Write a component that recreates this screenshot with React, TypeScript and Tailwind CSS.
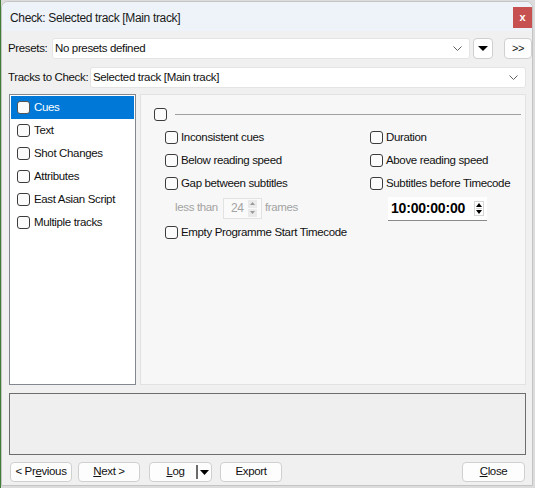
import type { ReactNode } from "react";

// ── Small pieces ────────────────────────────────────────────────────────────

function Box({ className = "" }: { className?: string }) {
  return (
    <span
      className={`inline-block w-[13px] h-[13px] shrink-0 rounded-[3px] border border-[#3c3c3c] bg-[#fbfbfb] ${className}`}
    />
  );
}

function Check({ label }: { label: string }) {
  return (
    <div className="flex items-center h-[23px] gap-[3px]">
      <Box />
      <span>{label}</span>
    </div>
  );
}

function Chevron() {
  return (
    <svg width="9" height="6" viewBox="0 0 9 6" className="shrink-0">
      <polyline points="0.5,0.5 4.5,4.5 8.5,0.5" fill="none" stroke="#606060" strokeWidth="1" />
    </svg>
  );
}

function Combo({ text, className = "" }: { text: string; className?: string }) {
  return (
    <div
      className={`flex items-center h-[21px] bg-white border border-[#e4e4e4] rounded-[3px] pl-[2px] pr-[7px] ${className}`}
    >
      <span className="flex-1 truncate">{text}</span>
      <Chevron />
    </div>
  );
}

function Button({ children, className = "" }: { children: ReactNode; className?: string }) {
  return (
    <div
      className={`flex items-center justify-center h-[20px] bg-[#fdfdfd] border border-[#d0d0d0] rounded-[4px] ${className}`}
    >
      {children}
    </div>
  );
}

function TriDown({ color = "#000", w = 9, h = 5 }: { color?: string; w?: number; h?: number }) {
  return (
    <svg width={w} height={h} viewBox={`0 0 ${w} ${h}`}>
      <polygon points={`0,0 ${w},0 ${w / 2},${h}`} fill={color} />
    </svg>
  );
}

function TriUp({ color = "#000", w = 7, h = 4 }: { color?: string; w?: number; h?: number }) {
  return (
    <svg width={w} height={h} viewBox={`0 0 ${w} ${h}`}>
      <polygon points={`0,${h} ${w},${h} ${w / 2},0`} fill={color} />
    </svg>
  );
}

const LIST = ["Cues", "Text", "Shot Changes", "Attributes", "East Asian Script", "Multiple tracks"];

// ── App ─────────────────────────────────────────────────────────────────────

export default function App() {
  return (
    <div className="w-[535px] h-[488px] bg-[#dcdcdc] border-l border-[#3f7f35] overflow-hidden font-['Liberation_Sans',Arial,sans-serif] text-[11.5px] tracking-[-0.35px] text-[#111]">
      <div className="w-[532px] h-[485px] mt-[1px] flex flex-col bg-[#f0f0f0] border border-[#c4c4c4] rounded-t-[7px] overflow-hidden">
        {/* Title bar */}
        <div className="h-[29px] shrink-0 flex items-start bg-[#eef3f9]">
          <span className="pl-[8px] pt-[7px] text-[12px] text-[#1a1a1a] flex-1">
            Check: Selected track [Main track]
          </span>
          <div className="mt-[5px] w-[19px] h-[21px] bg-[#c75050] flex items-center justify-center text-white font-bold text-[11px]">
            x
          </div>
        </div>

        {/* Presets */}
        <div className="flex items-center mt-[7px] pl-[6px] h-[21px]">
          <span className="w-[44px]">Presets:</span>
          <Combo text="No presets defined" className="w-[418px]" />
          <div className="ml-[3px] w-[20px] h-[21px] bg-white border border-[#cfcfcf] rounded-[4px] flex items-center justify-center">
            <TriDown w={10} h={5} />
          </div>
          <Button className="ml-[11px] w-[28px] h-[21px] text-[11px]">&gt;&gt;</Button>
        </div>

        {/* Tracks */}
        <div className="flex items-center mt-[8px] pl-[6px] pr-[6px] h-[21px]">
          <span className="w-[82px]">Tracks to Check:</span>
          <Combo text="Selected track [Main track]" className="flex-1" />
        </div>

        {/* Main */}
        <div className="flex mt-[6px] pl-[7px] pr-[6px] h-[291px] gap-[4px]">
          <div className="w-[127px] bg-white border border-[#828790] p-px">
            {LIST.map((item, i) => (
              <div
                key={item}
                className={`flex items-center h-[23px] pl-[6px] gap-[4px] ${i === 0 ? "bg-[#0078d7] text-white" : ""}`}
              >
                <Box className={i === 0 ? "border-[#555]" : ""} />
                <span>{item}</span>
              </div>
            ))}
          </div>

          <div className="flex-1 bg-[#f7f7f7] border border-[#e2e2e2] pt-[13px] pl-[13px] pr-[4px]">
            <div className="flex items-center gap-[8px] h-[13px]">
              <Box />
              <div className="flex-1 h-px bg-[#a0a0a0]" />
            </div>

            <div className="flex mt-[5px] pl-[11px]">
              <div className="w-[205px] flex flex-col">
                <Check label="Inconsistent cues" />
                <Check label="Below reading speed" />
                <Check label="Gap between subtitles" />
                <div className="flex items-center h-[26px] pl-[10px] text-[#a3a3a3]">
                  <span>less than</span>
                  <div className="ml-[5px] w-[39px] h-[21px] border border-[#e2e2e2] bg-[#fafafa] flex items-center pl-[7px]">
                    <span className="text-[12px] w-[16px]">24</span>
                    <div className="flex flex-col gap-[1px] ml-[1px]">
                      <div className="w-[9px] h-[8px] bg-[#eaeaea] flex items-center justify-center">
                        <TriUp color="#9a9a9a" w={5} h={3} />
                      </div>
                      <div className="w-[9px] h-[8px] bg-[#eaeaea] flex items-center justify-center">
                        <TriDown color="#9a9a9a" w={5} h={3} />
                      </div>
                    </div>
                  </div>
                  <span className="ml-[3px]">frames</span>
                </div>
                <Check label="Empty Programme Start Timecode" />
              </div>

              <div className="flex flex-col">
                <Check label="Duration" />
                <Check label="Above reading speed" />
                <Check label="Subtitles before Timecode" />
                <div className="ml-[18px] mt-[2px] w-[99px] h-[24px] bg-white border-b border-[#8a8a8a] flex items-center pl-[3px]">
                  <span className="text-[14px] font-bold tracking-[-0.2px] text-black w-[83px]">10:00:00:00</span>
                  <div className="flex flex-col gap-[1px] border border-[#d6d6d6] px-[1px] py-[1px]">
                    <TriUp w={6} h={4} />
                    <div className="h-px bg-[#d6d6d6]" />
                    <TriDown w={6} h={4} />
                  </div>
                </div>
              </div>
            </div>
          </div>
        </div>

        {/* Message box */}
        <div className="mt-[8px] ml-[7px] mr-[6px] h-[62px] bg-[#efefef] border border-[#6d6d6d]" />

        {/* Buttons */}
        <div className="flex items-center mt-[7px] pl-[8px] pr-[7px]">
          <Button className="w-[62px]">
            &lt; Pr<span className="underline">e</span>vious
          </Button>
          <Button className="ml-[6px] w-[62px]">
            <span className="underline">N</span>ext &gt;
          </Button>
          <Button className="ml-[9px] w-[63px] relative">
            <span className="pr-[10px]">
              <span className="underline">L</span>og
            </span>
            <span className="absolute right-[13px] top-[2px] w-[2px] h-[14px] bg-[#6a6a6a]" />
            <span className="absolute right-[2px] top-[7px]">
              <TriDown w={9} h={5} />
            </span>
          </Button>
          <Button className="ml-[8px] w-[62px]">Export</Button>
          <div className="flex-1" />
          <Button className="w-[63px]">
            <span className="underline">C</span>lose
          </Button>
        </div>
      </div>
    </div>
  );
}
